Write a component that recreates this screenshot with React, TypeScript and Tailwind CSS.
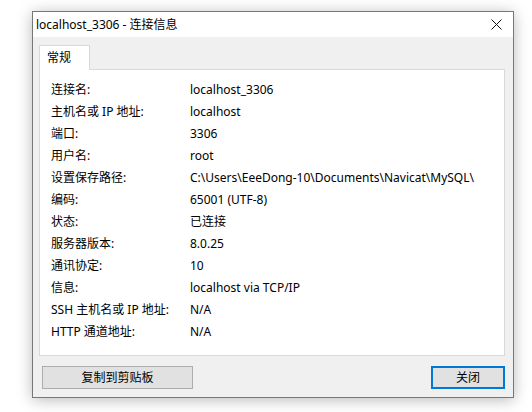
import React from "react";

const rows: [string, string][] = [
  ["连接名:", "localhost_3306"],
  ["主机名或 IP 地址:", "localhost"],
  ["端口:", "3306"],
  ["用户名:", "root"],
  ["设置保存路径:", "C:\\Users\\EeeDong-10\\Documents\\Navicat\\MySQL\\"],
  ["编码:", "65001 (UTF-8)"],
  ["状态:", "已连接"],
  ["服务器版本:", "8.0.25"],
  ["通讯协定:", "10"],
  ["信息:", "localhost via TCP/IP"],
  ["SSH 主机名或 IP 地址:", "N/A"],
  ["HTTP 通道地址:", "N/A"],
];

export default function App() {
  return (
    <div
      className="w-[532px] h-[412px] bg-white pt-[11px] pl-[32px] text-[12px] text-black"
      style={{ fontFamily: '"Noto Sans", "Noto Sans CJK SC", sans-serif' }}
    >
      <div className="w-[482px] h-[387px] border border-[#777777] bg-[#f0f0f0] shadow-[0_2px_14px_rgba(0,0,0,0.28)] flex flex-col">
        {/* title bar */}
        <div className="h-[25px] bg-white flex items-center justify-between pl-[3px] pr-[10px] shrink-0">
          <span>localhost_3306 - 连接信息</span>
          <svg width="11" height="11" viewBox="0 0 11 11" className="mr-[1px]">
            <path d="M0.5 0.5L10.5 10.5M10.5 0.5L0.5 10.5" stroke="#111" strokeWidth="1" />
          </svg>
        </div>

        {/* body */}
        <div className="flex-1 pt-[8px] pl-[6px] pr-[8px]">
          <div className="flex">
            <div className="relative z-10 -mb-px w-[51px] h-[25px] bg-white border border-b-0 border-[#d9d9d9] pl-[7px] pt-[3px]">
              常规
            </div>
          </div>
          <div className="h-[287px] bg-white border border-[#d9d9d9] pt-[9px] pl-[11px]">
            {rows.map(([k, v]) => (
              <div key={k} className="flex h-[22px] items-center">
                <span className="w-[139px] shrink-0">{k}</span>
                <span className="whitespace-nowrap">{v}</span>
              </div>
            ))}
          </div>

          <div className="flex justify-between mt-[10px] pl-[3px]">
            <button className="w-[151px] h-[23px] bg-[#e1e1e1] border border-[#adadad] text-[12px]">
              复制到剪贴板
            </button>
            <button className="w-[74px] h-[23px] bg-[#e1e1e1] border-2 border-[#0078d7] text-[12px]">
              关闭
            </button>
          </div>
        </div>
      </div>
    </div>
  );
}
